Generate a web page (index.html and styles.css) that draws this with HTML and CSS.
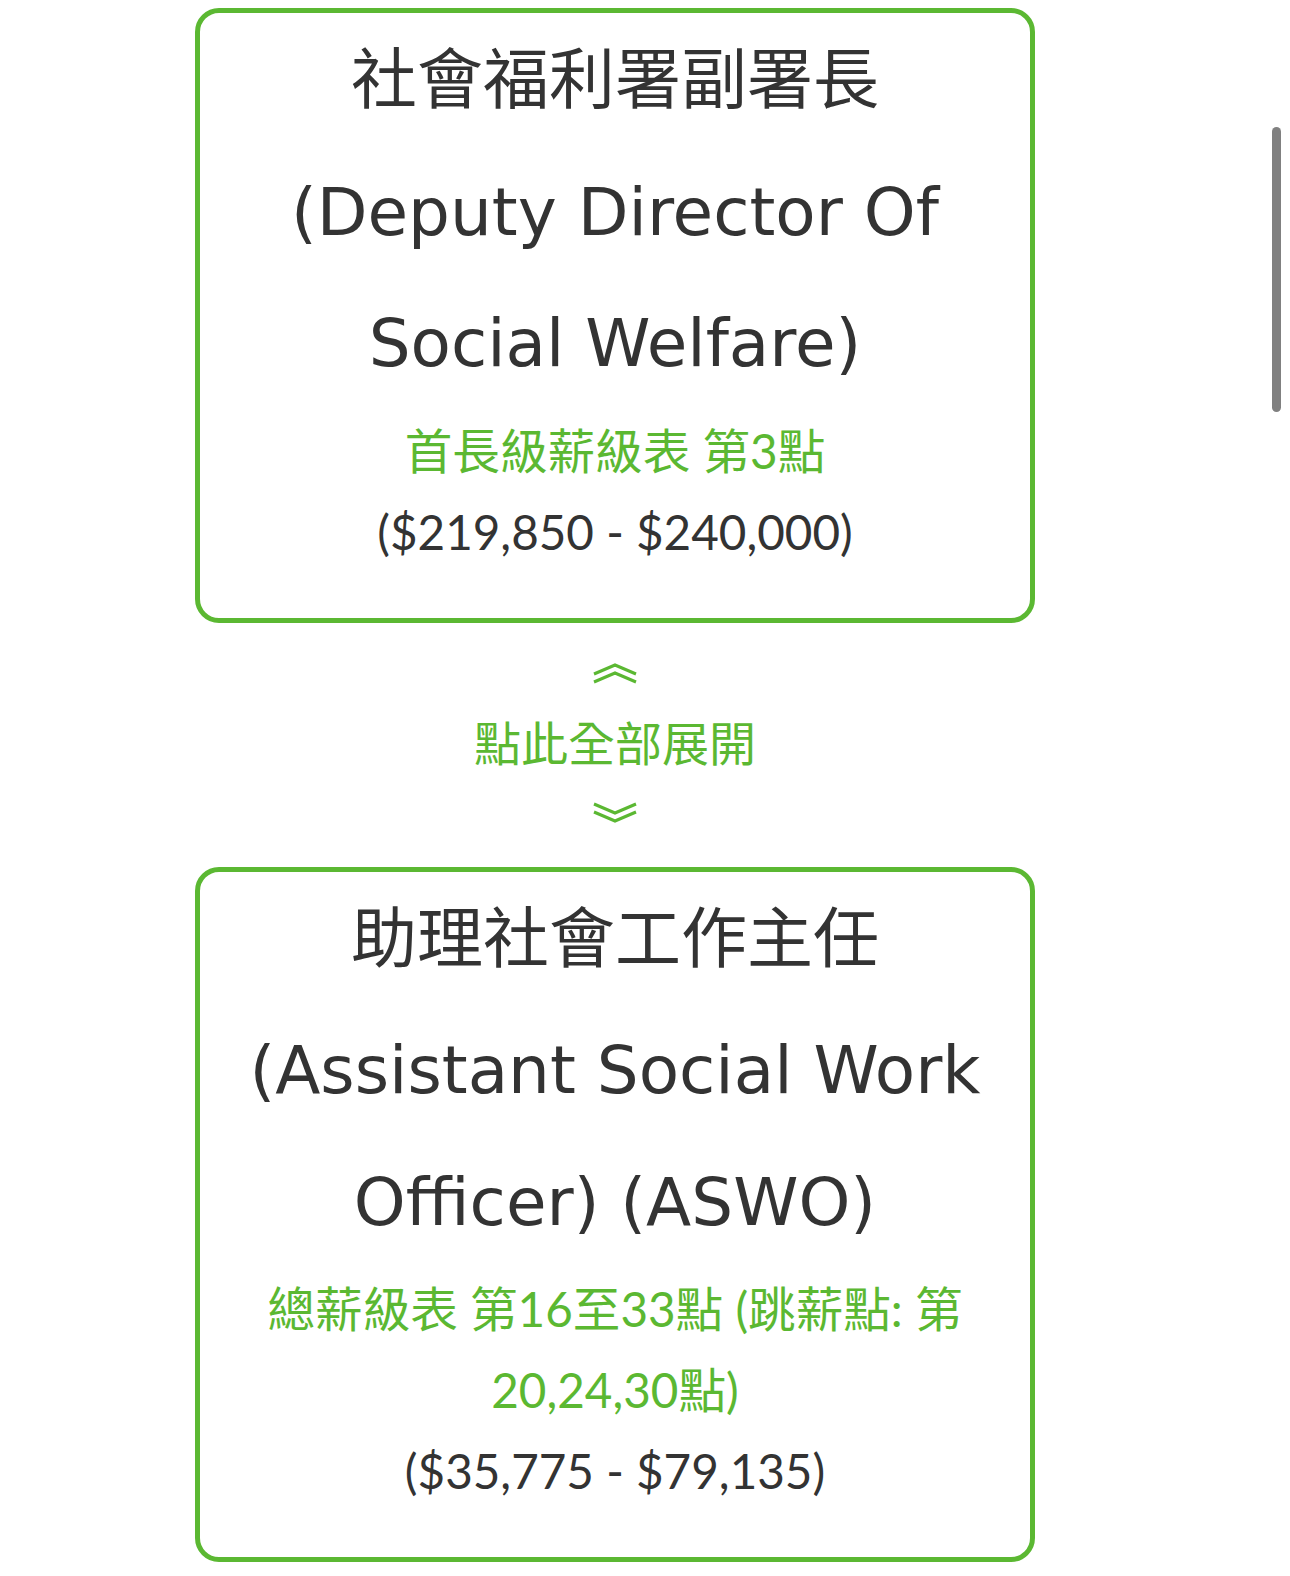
FILE: index.html
```html
<!DOCTYPE html>
<html lang="zh-Hant">
<head>
<meta charset="utf-8">
<title>職位</title>
<link rel="stylesheet" href="styles.css">
</head>
<body>
<div class="page">
  <div class="card">
    <div class="title">社會福利署副署長<br>(Deputy Director Of Social Welfare)</div>
    <div class="scale">首長級薪級表 第3點</div>
    <div class="salary">($219,850 - $240,000)</div>
  </div>

  <div class="expand">
    <svg class="chev" width="46" height="22" viewBox="0 0 46 22"><path d="M2 12 L23 3 L44 12 M2 20 L23 11 L44 20" fill="none" stroke="#5bb832" stroke-width="3"/></svg>
    <div class="expand-text">點此全部展開</div>
    <svg class="chev" width="46" height="22" viewBox="0 0 46 22"><path d="M2 2 L23 11 L44 2 M2 10 L23 19 L44 10" fill="none" stroke="#5bb832" stroke-width="3"/></svg>
  </div>

  <div class="card">
    <div class="title">助理社會工作主任<br>(Assistant Social Work Officer) (ASWO)</div>
    <div class="scale">總薪級表 第16至33點 (跳薪點: 第 20,24,30點)</div>
    <div class="salary">($35,775 - $79,135)</div>
  </div>
</div>
<div class="scrollbar"></div>
</body>
</html>
```
FILE: styles.css
```css
html, body {
  background: #ffffff;
}
body {
  margin: 8px 0 0 0;
}
.page {
  width: 1230px;
  display: flex;
  flex-direction: column;
  align-items: center;
}
.card {
  box-sizing: border-box;
  width: 840px;
  border: 5px solid #5bb832;
  border-radius: 24px;
  padding: 2px 40px 46px;
  text-align: center;
}
.title {
  font-family: "DejaVu Sans", "Noto Sans CJK TC", sans-serif;
  font-size: 66px;
  line-height: 131.5px;
  color: #333333;
}
.scale {
  font-family: Lato, "Noto Sans CJK TC", sans-serif;
  font-size: 47.6px;
  line-height: 81px;
  color: #5bb832;
}
.salary {
  font-family: Lato, "Noto Sans CJK TC", sans-serif;
  font-size: 47.6px;
  line-height: 81px;
  color: #333333;
}
.expand {
  display: flex;
  flex-direction: column;
  align-items: center;
  padding: 39px 0 43px;
}
.chev {
  display: block;
}
.expand-text {
  font-family: "Noto Sans CJK TC", sans-serif;
  font-size: 47px;
  line-height: 48px;
  color: #5bb832;
  margin: 33px 0 37px;
}
.scrollbar {
  position: fixed;
  left: 1272px;
  top: 127px;
  width: 9px;
  height: 285px;
  border-radius: 5px;
  background: #808080;
}
```
